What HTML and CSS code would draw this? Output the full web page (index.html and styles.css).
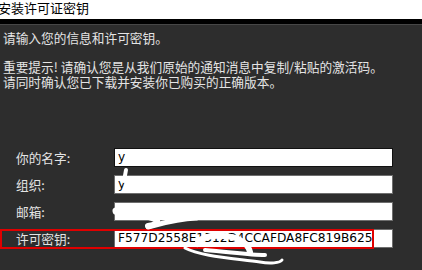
FILE: index.html
```html
<!DOCTYPE html>
<html lang="zh">
<head>
<meta charset="utf-8">
<link rel="stylesheet" href="styles.css">
</head>
<body>
<div class="window">
  <div class="titlebar"><span class="title">安装许可证密钥</span></div>
  <div class="divider"></div>
  <div class="content">
    <p class="line">请输入您的信息和许可密钥。</p>
    <div class="notice">
      <p class="line">重要提示! 请确认您是从我们原始的通知消息中复制/粘贴的激活码。</p>
      <p class="line">请同时确认您已下载并安装你已购买的正确版本。</p>
    </div>
    <div class="form">
      <div class="row">
        <span class="label">你的名字:</span>
        <div class="field focused">y</div>
      </div>
      <div class="row">
        <span class="label">组织:</span>
        <div class="field">y</div>
      </div>
      <div class="row">
        <span class="label">邮箱:</span>
        <div class="field"></div>
      </div>
      <div class="row key-row">
        <span class="label">许可密钥:</span>
        <div class="field key">F577D2558E1312D4CCAFDA8FC819B625</div>
      </div>
    </div>
  </div>
  <svg class="scribble" width="422" height="270" viewBox="0 0 422 270">
    <g fill="none" stroke="#fff" stroke-linecap="round" stroke-linejoin="round">
      <path d="M125 162 L138 161" stroke-width="3"/>
      <path d="M126 170 L124 181" stroke-width="4"/>
      <path d="M124 191 L131 188" stroke-width="3"/>
      <path d="M116 211 C140 206 190 207 230 209 C260 210 290 212 296 215" stroke-width="7"/>
      <path d="M118 213 C150 214 170 222 148 226" stroke-width="6"/>
      <path d="M148 227 C160 224 175 219 196 218" stroke-width="5"/>
      <path d="M197 244 C200 238 210 235 224 236 C240 237 248 244 250 252" stroke-width="6"/>
      <path d="M205 250 C230 252 250 255 265 255" stroke-width="4"/>
      <path d="M185 248 C200 256 230 258 260 262 C270 264 280 263 282 260" stroke-width="3"/>
    </g>
  </svg>
</div>
</body>
</html>
```
FILE: styles.css
```css
html, body {
  margin: 0;
  padding: 0;
}
body {
  width: 422px;
  height: 270px;
  overflow: hidden;
  background: #2d2d2d;
  font-family: "Noto Sans CJK SC", "Liberation Sans", sans-serif;
}
.window {
  position: relative;
  width: 422px;
  height: 270px;
}
.titlebar {
  height: 19px;
  background: #fff;
  overflow: hidden;
}
.title {
  display: block;
  margin-left: -2px;
  font-size: 13px;
  line-height: 15px;
  color: #000;
}
.divider {
  height: 5px;
  background: #000;
  border-bottom: 1px solid #474747;
}
.content {
  padding: 5px 0 0 3px;
  color: #e4e4e4;
  font-size: 12.7px;
}
.line {
  margin: 0;
  line-height: 15px;
  white-space: nowrap;
}
.notice {
  margin-top: 14px;
}
.form {
  margin-top: 59px;
  display: flex;
  flex-direction: column;
  gap: 8px;
}
.row {
  display: flex;
  align-items: center;
  height: 19px;
  padding-left: 13px;
  margin-right: 29px;
}
.label {
  width: 98px;
  color: #e4e4e4;
  font-size: 12.7px;
  line-height: 15px;
}
.field {
  flex: 1;
  box-sizing: border-box;
  height: 19px;
  background: #fff;
  border: 1px solid #6e6e6e;
  color: #000;
  font-family: "DejaVu Sans", sans-serif;
  font-size: 12.2px;
  line-height: 17px;
  padding-left: 3px;
  white-space: nowrap;
  overflow: hidden;
}
.field.focused {
  border-color: #111;
}
.key-row {
  position: relative;
}
.key-row::after {
  content: "";
  position: absolute;
  left: -3px;
  top: 0;
  width: 374px;
  height: 20px;
  box-sizing: border-box;
  border: 2px solid #e00000;
  pointer-events: none;
}
.scribble {
  position: absolute;
  left: 0;
  top: 0;
}
```
